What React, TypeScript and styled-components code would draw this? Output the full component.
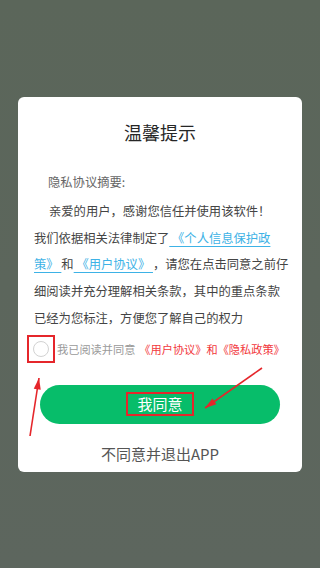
import React, {useState} from "react";
import styled, {createGlobalStyle} from "styled-components";

const GlobalStyle = createGlobalStyle`
  html, body {
    margin: 0;
    padding: 0;
  }
  body {
    font-family: "Noto Sans CJK SC", "Noto Sans", sans-serif;
  }
`;

const Screen = styled.div`
  position: relative;
  width: 320px;
  height: 568px;
  background: linear-gradient(180deg, #5b665a 0%, #5d665e 100%);
  display: flex;
  flex-direction: column;
  align-items: center;
  padding-top: 97px;
  box-sizing: border-box;
  overflow: hidden;
`;

const Dialog = styled.div`
  width: 284px;
  background: #fff;
  border-radius: 6px;
  display: flex;
  flex-direction: column;
  box-sizing: border-box;
`;

const Title = styled.div`
  font-size: 18px;
  color: #262626;
  text-align: center;
  line-height: 24px;
  padding-top: 23px;
  margin-bottom: 25px;
`;

const Body = styled.div`
  padding: 0 12px 0 16px;
  font-size: 12.3px;
  line-height: 26.8px;
  color: #444;
`;

const Heading = styled.div`
  padding-left: 14px;
  color: #666;
`;

const Paragraph = styled.p`
  margin: 2px 0 0;
  text-align: left;
`;

const Indent = styled.span`
  padding-left: 15px;
`;

const Link = styled.a`
  color: #3db2e6;
  text-decoration: underline;
  text-underline-offset: 3px;
  white-space: pre-wrap;
`;

const ConsentRow = styled.label`
  display: flex;
  align-items: center;
  padding: 3px 0 0 9px;
  font-size: 11.2px;
  white-space: nowrap;
  cursor: pointer;
`;

const Marked = styled.span`
  display: inline-flex;
  align-items: center;
  justify-content: center;
  border: 2px solid #e5262b;
  box-sizing: border-box;
`;

const CheckFrame = styled(Marked)`
  width: 28px;
  height: 28px;
  margin-right: 2px;
`;

const Circle = styled.span<{$checked: boolean}>`
  width: 16px;
  height: 16px;
  border-radius: 50%;
  border: 1px solid #d2d2d2;
  box-sizing: border-box;
  background: ${p => (p.$checked ? "#07bd6a" : "#fff")};
`;

const ConsentText = styled.span`
  color: #9a9a9a;
`;

const Policy = styled.span`
  color: #f2373c;
  margin-left: 4px;
`;

const AgreeButton = styled.button`
  margin: 22px auto 0;
  width: 240px;
  height: 39px;
  border: none;
  border-radius: 20px;
  background: #07bd6a;
  color: #fff;
  font-family: inherit;
  font-size: 15px;
  display: flex;
  align-items: center;
  justify-content: center;
  cursor: pointer;
`;

const ButtonLabel = styled(Marked)`
  width: 68px;
  height: 24px;
  line-height: 20px;
`;

const Exit = styled.div`
  text-align: center;
  font-size: 15px;
  color: #555;
  line-height: 20px;
  padding: 20px 0 8px;
`;

const Annotations = styled.svg`
  position: absolute;
  left: 0;
  top: 0;
  pointer-events: none;
`;

function Arrow({x1, y1, x2, y2}: {x1: number; y1: number; x2: number; y2: number}) {
  const angle = Math.atan2(y2 - y1, x2 - x1);
  const len = 12;
  const spread = 0.3;
  const ax = x2 - len * Math.cos(angle - spread);
  const ay = y2 - len * Math.sin(angle - spread);
  const bx = x2 - len * Math.cos(angle + spread);
  const by = y2 - len * Math.sin(angle + spread);
  return (
    <g>
      <line x1={x1} y1={y1} x2={x2} y2={y2} stroke="#e5262b" strokeWidth={1.6} />
      <polygon points={`${x2},${y2} ${ax},${ay} ${bx},${by}`} fill="#e5262b" />
    </g>
  );
}

export default function App() {
  const [checked, setChecked] = useState(false);

  return (
    <>
      <GlobalStyle />
      <Screen>
        <Dialog>
          <Title>温馨提示</Title>
          <Body>
            <Heading>隐私协议摘要:</Heading>
            <Paragraph>
              <Indent>亲爱的用户，感谢您信任并使用该软件！</Indent>
              <br />
              我们依据相关法律制定了<Link>{" 《个人信息保护政策》 "}</Link>和<Link>{" 《用户协议》 "}</Link>，请您在点击同意之前仔细阅读并充分理解相关条款，其中的重点条款已经为您标注，方便您了解自己的权力
            </Paragraph>
          </Body>
          <ConsentRow onClick={() => setChecked(!checked)}>
            <CheckFrame>
              <Circle $checked={checked} />
            </CheckFrame>
            <ConsentText>我已阅读并同意</ConsentText>
            <Policy>《用户协议》和《隐私政策》</Policy>
          </ConsentRow>
          <AgreeButton>
            <ButtonLabel>我同意</ButtonLabel>
          </AgreeButton>
          <Exit>不同意并退出APP</Exit>
        </Dialog>
        <Annotations width={320} height={568}>
          <Arrow x1={30} y1={436} x2={39} y2={378} />
          <Arrow x1={262} y1={368} x2={205} y2={408} />
        </Annotations>
      </Screen>
    </>
  );
}
